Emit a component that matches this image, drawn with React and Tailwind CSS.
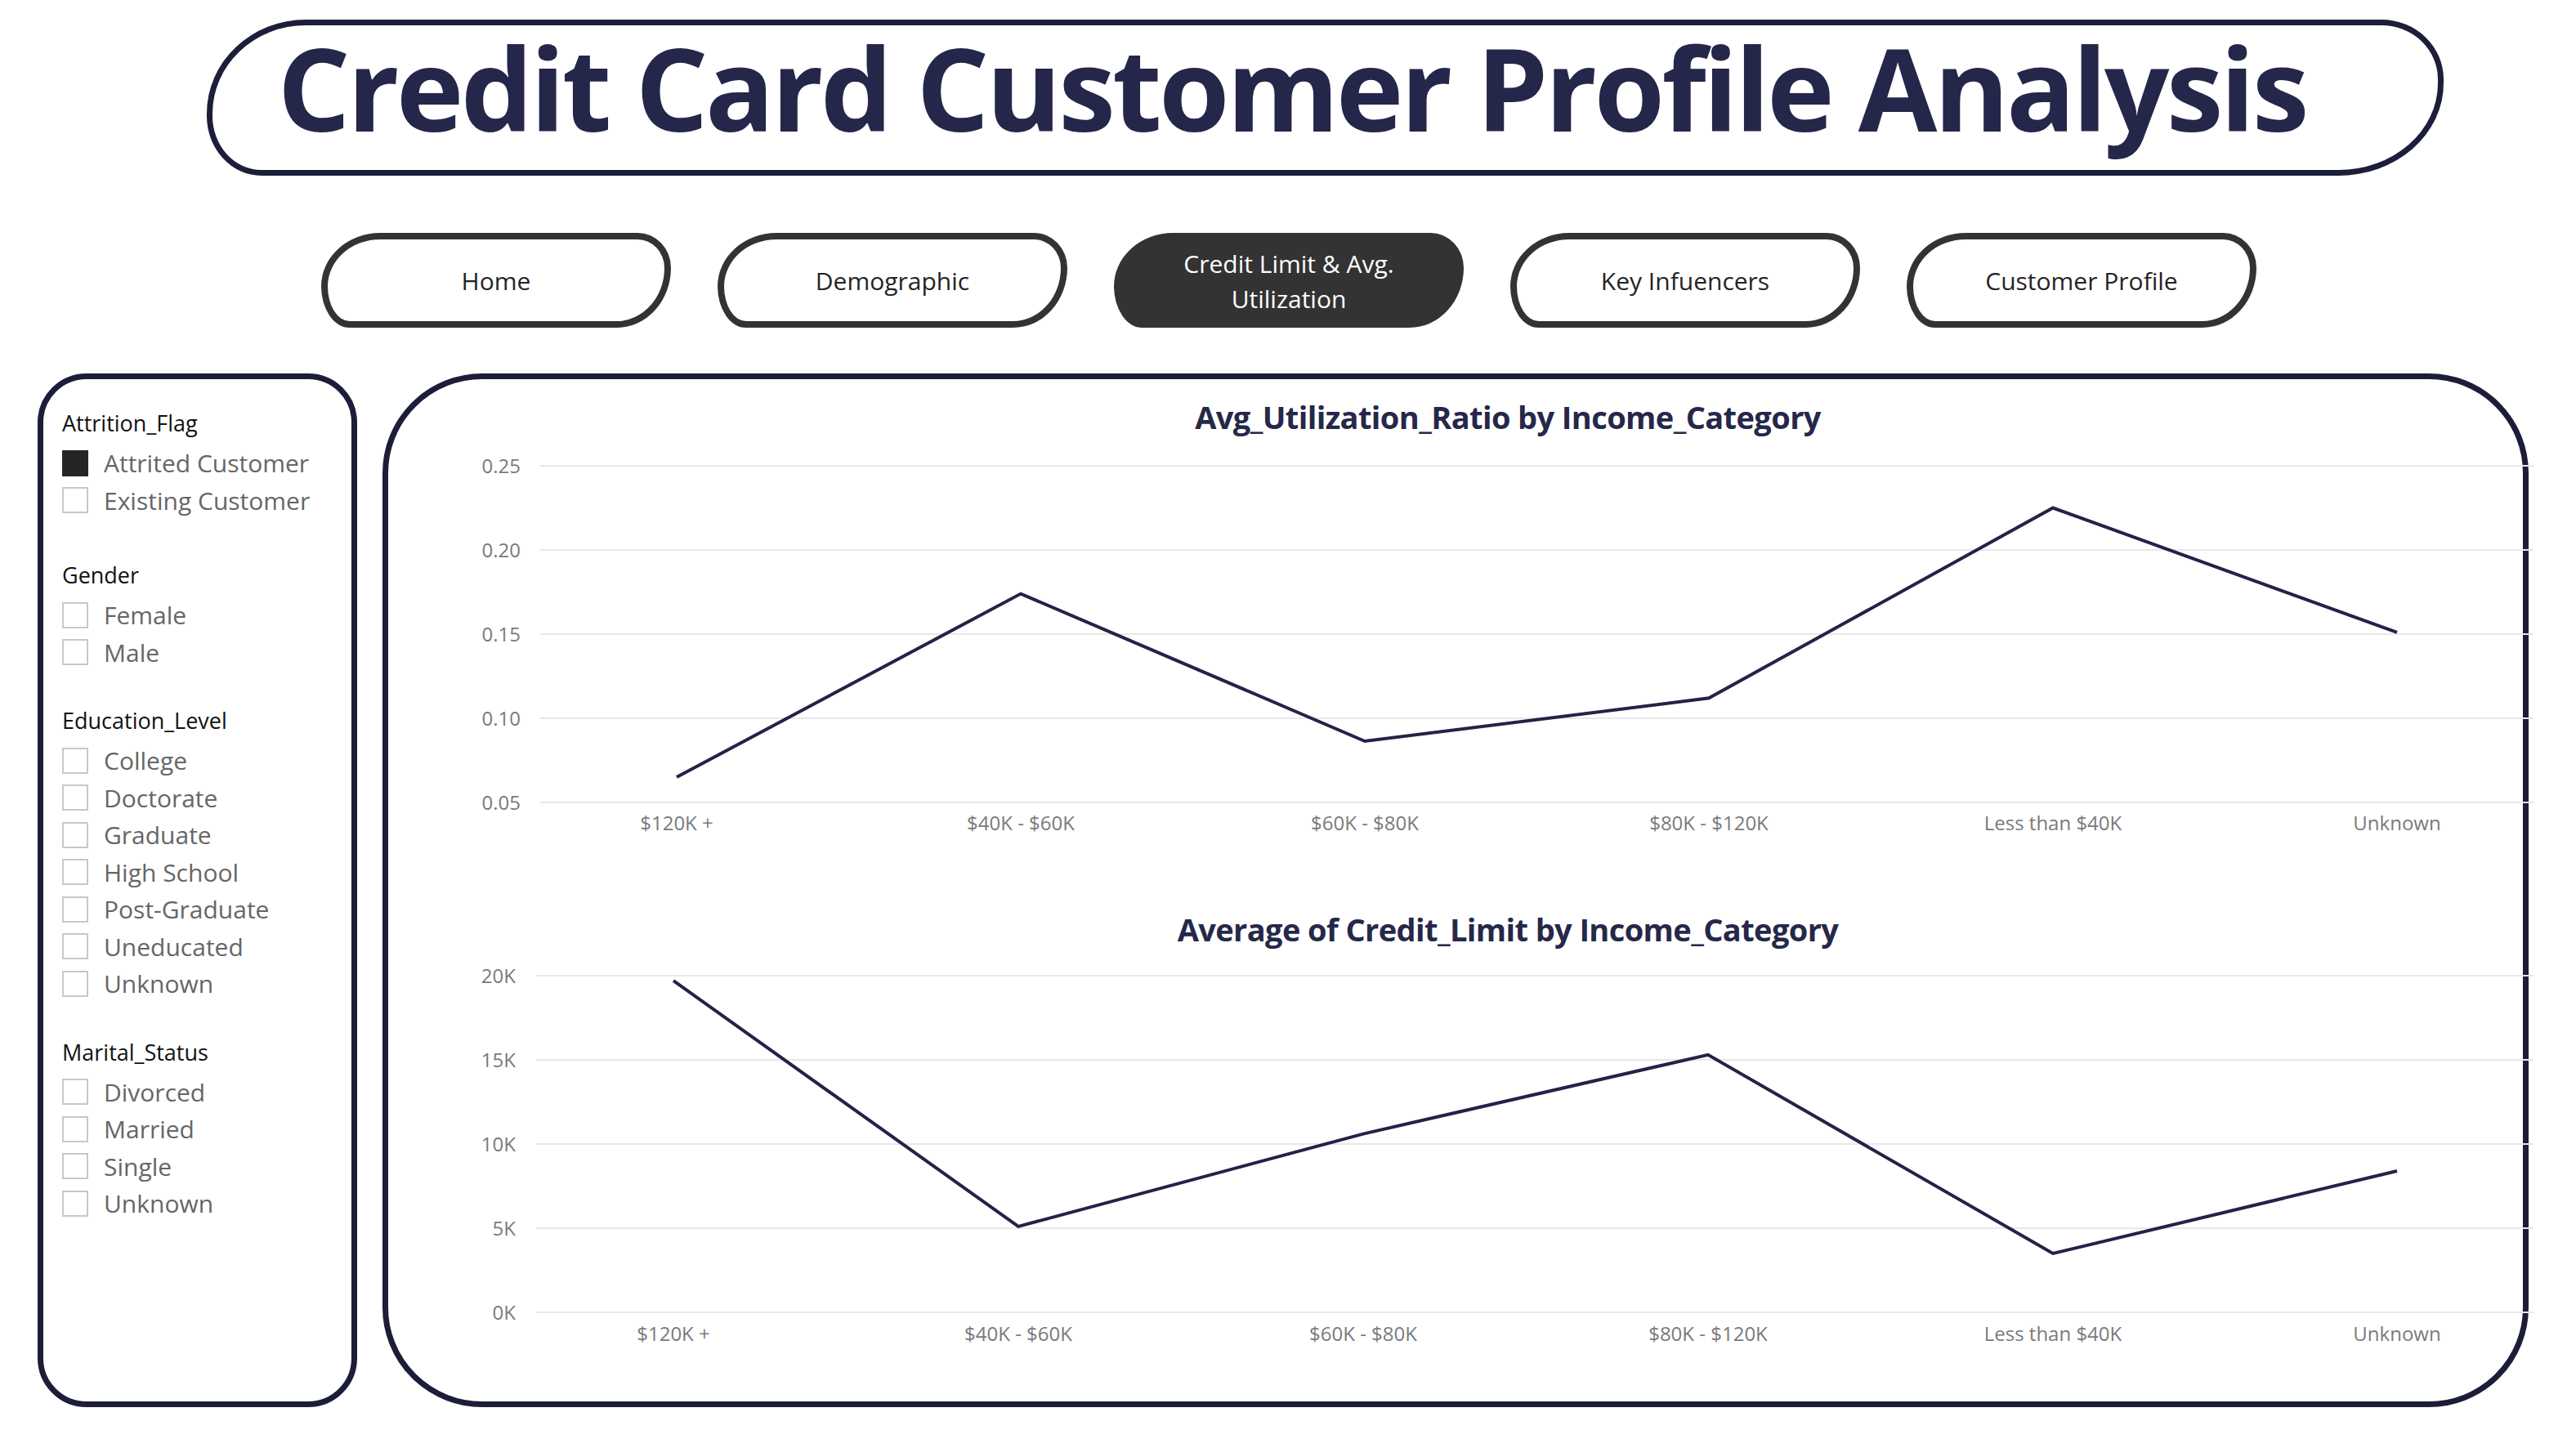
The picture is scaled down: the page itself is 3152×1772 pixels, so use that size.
import React from "react";

const tabs = [
  { label: "Home" },
  { label: "Demographic" },
  { label: "Credit Limit & Avg. Utilization", lines: ["Credit Limit & Avg.", "Utilization"], active: true },
  { label: "Key Infuencers" },
  { label: "Customer Profile" },
];

const slicers = [
  { title: "Attrition_Flag", items: ["Attrited Customer", "Existing Customer"], checked: "Attrited Customer", gap: "mt-0" },
  { title: "Gender", items: ["Female", "Male"], gap: "mt-[51px]" },
  {
    title: "Education_Level",
    items: ["College", "Doctorate", "Graduate", "High School", "Post-Graduate", "Uneducated", "Unknown"],
    gap: "mt-[43px]",
  },
  { title: "Marital_Status", items: ["Divorced", "Married", "Single", "Unknown"], gap: "mt-[43px]" },
];

const categories = ["$120K +", "$40K - $60K", "$60K - $80K", "$80K - $120K", "Less than $40K", "Unknown"];

const utilChart = {
  title: "Avg_Utilization_Ratio by Income_Category",
  ticks: ["0.25", "0.20", "0.15", "0.10", "0.05"],
  max: 0.25,
  min: 0.05,
  values: [0.065, 0.174, 0.0864, 0.112, 0.225, 0.151],
  xs: [353, 774, 1195, 1616, 2037, 2458],
  gridTop: 41,
  gridX: 186,
  labelX: 162,
  xLabelY: 487,
  height: 511,
};

const limitChart = {
  title: "Average of Credit_Limit by Income_Category",
  ticks: ["20K", "15K", "10K", "5K", "0K"],
  max: 20000,
  min: 0,
  values: [19700, 5100, 10600, 15300, 3500, 8400],
  xs: [349, 771, 1193, 1615, 2037, 2458],
  gridTop: 38,
  gridX: 181,
  labelX: 156,
  xLabelY: 485,
  height: 500,
};

const Checkbox = ({ on }) =>
  on ? (
    <span className="block w-[32px] h-[32px] bg-[#252525]" />
  ) : (
    <span className="block w-[32px] h-[32px] border-2 border-[#c8c8c8]" />
  );

const Slicer = () => (
  <div className="w-[391px] h-[1265px] border-[7px] border-[#1c1d38] rounded-[60px] pt-[36px] pl-[23px] shrink-0">
    {slicers.map((s) => (
      <div key={s.title} className={s.gap}>
        <div className="h-[36px] leading-[36px] text-[27px] text-[#111111] mb-[8px]">{s.title}</div>
        {s.items.map((item) => (
          <div key={item} className="flex items-center h-[45.5px]">
            <Checkbox on={s.checked === item} />
            <span className="ml-[19px] text-[30px] leading-[45.5px] text-[#666666]">{item}</span>
          </div>
        ))}
      </div>
    ))}
  </div>
);

const LineChart = ({ c, className }) => {
  const span = 412;
  const step = span / (c.ticks.length - 1);
  const toY = (v) => c.gridTop + ((c.max - v) / (c.max - c.min)) * span;
  const pts = c.values.map((v, i) => `${c.xs[i]},${toY(v).toFixed(1)}`).join(" ");
  return (
    <div className={className}>
      <div className="h-[38px] leading-[38px] text-[38px] font-bold text-[#252849] tracking-[-0.6px] text-center pl-[128px]">
        {c.title}
      </div>
      <svg width="2612" height={c.height} className="block overflow-visible">
        {c.ticks.map((t, i) => {
          const y = c.gridTop + i * step;
          return (
            <g key={t}>
              <line x1={c.gridX} x2="2625" y1={y} y2={y} stroke="#e8e8e8" strokeWidth="2" />
              <text x={c.labelX} y={y + 9} textAnchor="end" fontSize="24" fill="#7a7a7a">
                {t}
              </text>
            </g>
          );
        })}
        {categories.map((cat, i) => (
          <text key={cat} x={c.xs[i]} y={c.xLabelY} textAnchor="middle" fontSize="24" fill="#7a7a7a">
            {cat}
          </text>
        ))}
        <polyline points={pts} fill="none" stroke="#222347" strokeWidth="4" />
      </svg>
    </div>
  );
};

export default function App() {
  return (
    <div className="w-[3152px] h-[1772px] bg-white overflow-hidden font-['Open_Sans','Noto_Sans',sans-serif]">
      <header className="ml-[253px] pt-[24px]">
        <div className="w-[2737px] h-[191px] border-[7px] border-[#1d1e3a] rounded-[121px_76px_129px_67px/115px_73px_113px_73px] flex items-center justify-center pr-[82px] pb-[26px]">
          <h1 className="text-[140px] leading-[140px] font-bold text-[#24264a] tracking-[-3.7px] whitespace-nowrap">
            Credit Card Customer Profile Analysis
          </h1>
        </div>
      </header>

      <nav className="flex gap-[57px] ml-[393px] mt-[70px]">
        {tabs.map((t) => (
          <div
            key={t.label}
            className={
              t.active
                ? "w-[428px] h-[116px] bg-[#333333] border-[8px] border-[#333333] rounded-[73px_41px_67px_35px/66px_43px_74px_51px] flex flex-col items-center justify-center pt-[2px] text-[30px] leading-[43px] text-white"
                : "w-[428px] h-[116px] border-[8px] border-[#333333] rounded-[73px_41px_67px_35px/66px_43px_74px_51px] flex items-center justify-center text-[30px] text-[#252423]"
            }
          >
            {t.lines ? t.lines.map((l) => <span key={l}>{l}</span>) : t.label}
          </div>
        ))}
      </nav>

      <main className="flex mt-[56px] ml-[46px]">
        <Slicer />
        <section className="ml-[31px] w-[2626px] h-[1265px] border-[7px] border-[#1c1d38] rounded-[122px] shrink-0">
          <LineChart c={utilChart} className="mt-[27px]" />
          <LineChart c={limitChart} className="mt-[78px]" />
        </section>
      </main>
    </div>
  );
}
